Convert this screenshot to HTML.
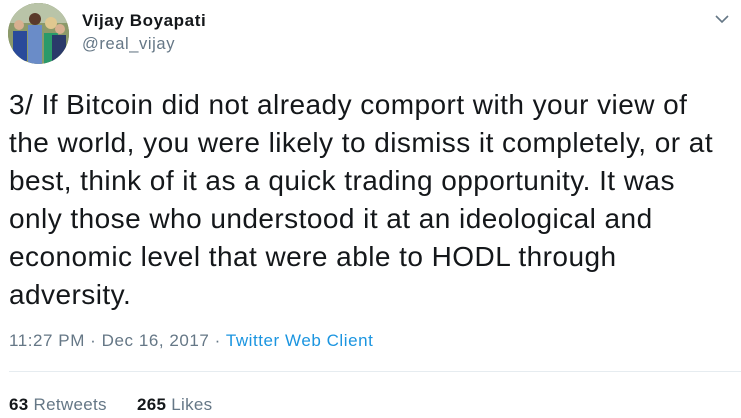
<!DOCTYPE html>
<html><head><meta charset="utf-8"><style>
body{margin:0;width:741px;height:418px;background:#fff;font-family:"Liberation Sans",sans-serif;position:relative;overflow:hidden;color:#14171a}
.av{position:absolute;left:8px;top:3px;width:61px;height:61px;border-radius:50%;overflow:hidden;background:#7a8a5a}
.name{position:absolute;left:82px;top:11px;font-weight:bold;font-size:17px;letter-spacing:0.6px}
.handle{position:absolute;left:82px;top:35px;font-size:16.5px;letter-spacing:0.6px;color:#657786}
.body{position:absolute;left:9px;top:86px;font-size:28px;line-height:38px;letter-spacing:0.45px}
.body div{white-space:nowrap}
.ts{position:absolute;left:9px;top:331px;font-size:17px;letter-spacing:0.55px;color:#657786}
.ts span{color:#1b95e0}
.hr{position:absolute;left:9px;right:0;top:371px;height:1px;background:#e6ecf0}
.st{position:absolute;left:9px;top:395px;font-size:17px;letter-spacing:0.3px;color:#657786}
.st b{color:#14171a}
</style></head><body>
<div class="av"><svg width="61" height="61"><rect width="61" height="61" fill="#8c9a6a"/><rect x="0" y="0" width="61" height="20" fill="#b9c4a8"/><rect x="5" y="28" width="14" height="30" fill="#2a4a9a"/><rect x="20" y="22" width="14" height="39" fill="#6a8cc8"/><circle cx="27" cy="16" r="6" fill="#5a3a2a"/><rect x="36" y="30" width="14" height="31" fill="#2a9a6a"/><circle cx="43" cy="20" r="6" fill="#e0c890"/><rect x="44" y="32" width="14" height="26" fill="#2a3a6a"/><circle cx="52" cy="26" r="5" fill="#d8b090"/><circle cx="11" cy="22" r="5" fill="#d8b090"/></svg></div>
<div class="name">Vijay Boyapati</div>
<div class="handle">@real_vijay</div>
<svg style="position:absolute;left:715px;top:14px" width="14" height="10"><path d="M1 2 L7 8 L13 2" stroke="#657786" stroke-width="1.6" fill="none"/></svg>
<div class="body">
<div>3/ If Bitcoin did not already comport with your view of</div>
<div>the world, you were likely to dismiss it completely, or at</div>
<div>best, think of it as a quick trading opportunity. It was</div>
<div>only those who understood it at an ideological and</div>
<div>economic level that were able to HODL through</div>
<div>adversity.</div>
</div>
<div class="ts">11:27 PM · Dec 16, 2017 · <span>Twitter Web Client</span></div>
<div class="hr"></div>
<div class="st"><b>63</b> Retweets &nbsp;&nbsp;&nbsp;&nbsp; <b>265</b> Likes</div>
</body></html>
